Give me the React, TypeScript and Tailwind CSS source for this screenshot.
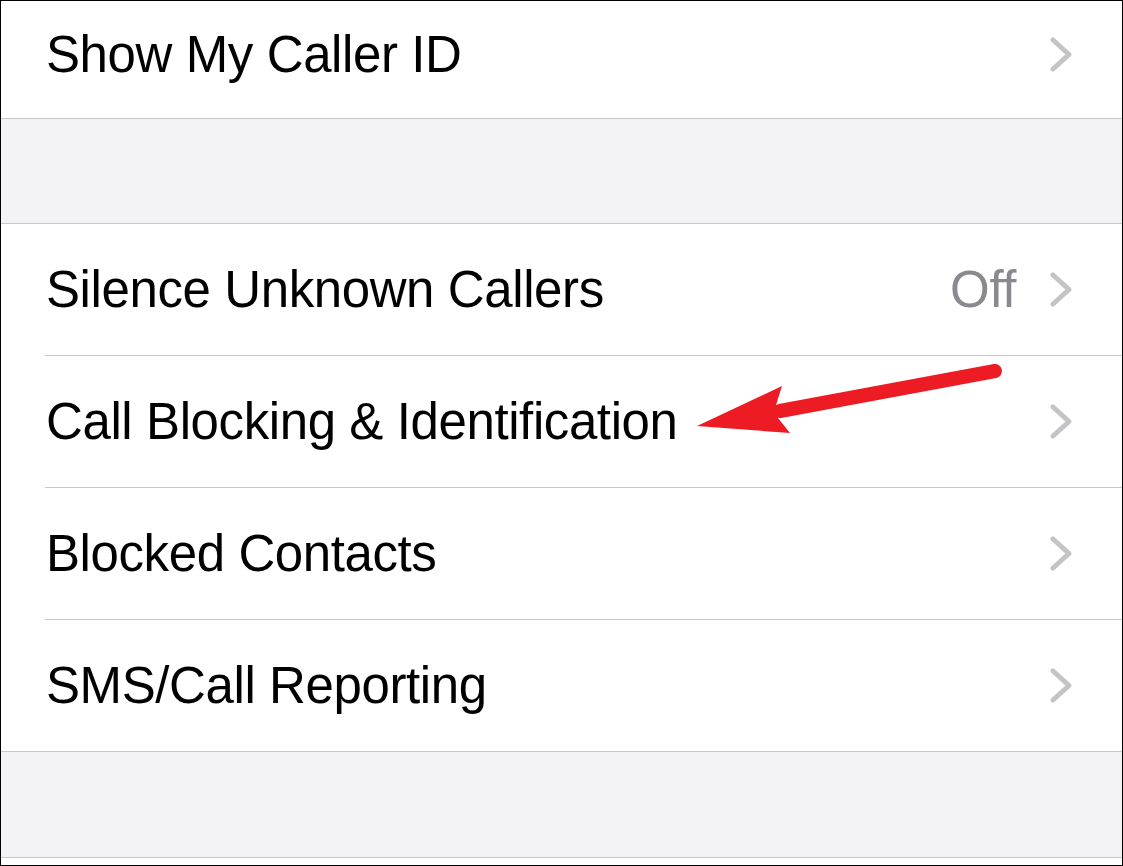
import React from 'react';

const rows = [
  { label: 'Silence Unknown Callers', value: 'Off' },
  { label: 'Call Blocking & Identification' },
  { label: 'Blocked Contacts' },
  { label: 'SMS/Call Reporting' },
];

function Chevron() {
  return (
    <svg width="22" height="35" viewBox="0 0 22 35" fill="none" className="shrink-0">
      <polyline
        points="3,3 19,17.5 3,32"
        stroke="#c4c4c7"
        strokeWidth="5"
        strokeLinecap="round"
        strokeLinejoin="round"
      />
    </svg>
  );
}

export default function App() {
  return (
    <div className="relative w-[1123px] h-[866px] overflow-hidden border border-black bg-white flex flex-col font-['Liberation_Sans',Arial,sans-serif] text-[51px] leading-[60px] tracking-[-0.4px] text-black">
      {/* Caller ID row */}
      <div className="h-[118px] shrink-0 flex items-center justify-between pl-[45px] pr-[50px] pb-[10px] border-b border-[#c8c7cc]">
        <span>Show My Caller ID</span>
        <Chevron />
      </div>

      {/* Section spacer */}
      <div className="h-[105px] shrink-0 bg-[#f2f2f7] border-b border-[#c8c7cc]" />

      {/* Blocking group */}
      <div className="shrink-0 pl-[44px] border-b border-[#c8c7cc]">
        {rows.map((row, i) => (
          <div
            key={row.label}
            className={
              i < rows.length - 1
                ? 'h-[132px] flex items-center justify-between pl-px pr-[50px] border-b border-[#c8c7cc]'
                : 'h-[131px] flex items-center justify-between pl-px pr-[50px]'
            }
          >
            <span>{row.label}</span>
            <div className="flex items-center gap-[34px]">
              {row.value && <span className="text-[#8a8a8e]">{row.value}</span>}
              <Chevron />
            </div>
          </div>
        ))}
      </div>

      <div className="h-[106px] shrink-0 bg-[#f2f2f7] border-b border-[#c8c7cc]" />
      <div className="flex-1 bg-white" />

      {/* Annotation arrow */}
      <svg
        className="absolute -left-px -top-px pointer-events-none"
        width="1123"
        height="866"
        viewBox="0 0 1123 866"
      >
        <line x1="995" y1="371" x2="780" y2="411" stroke="#ed1c24" strokeWidth="14" strokeLinecap="round" />
        <polygon points="697,426 782,386 776,405 778,418 790,433" fill="#ed1c24" />
      </svg>
    </div>
  );
}
